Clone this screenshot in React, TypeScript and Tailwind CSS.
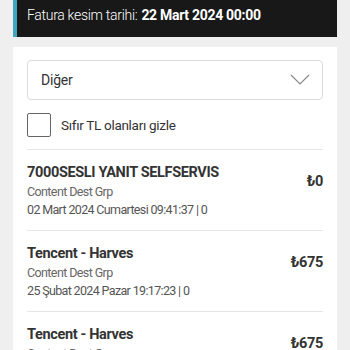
import React from 'react';

interface Item {
  title: string;
  sub: string;
  date: string;
  price: string;
}

const items: Item[] = [
  { title: '7000SESLI YANIT SELFSERVIS', sub: 'Content Dest Grp', date: '02 Mart 2024 Cumartesi 09:41:37 | 0', price: '₺0' },
  { title: 'Tencent - Harves', sub: 'Content Dest Grp', date: '25 Şubat 2024 Pazar 19:17:23 | 0', price: '₺675' },
  { title: 'Tencent - Harves', sub: 'Content Dest Grp', date: '25 Şubat 2024 Pazar 19:17:23 | 0', price: '₺675' },
];

const Row: React.FC<{ item: Item }> = ({ item }) => (
  <div className="border-t border-[#e6e6e6] flex justify-between pt-[13px] pb-[11px]">
    <div className="flex flex-col">
      <span className="text-[14.5px] leading-[20px] tracking-[-0.35px] font-bold text-[#333]">{item.title}</span>
      <span className="text-[12.5px] leading-[18px] tracking-[-0.6px] text-[#666]">{item.sub}</span>
      <span className="text-[12.5px] leading-[18px] tracking-[-0.65px] text-[#555]">{item.date}</span>
    </div>
    <span className="mt-[9px] text-[14.5px] leading-[20px] tracking-[-0.3px] font-bold text-[#333]">{item.price}</span>
  </div>
);

export default function App() {
  return (
    <div className="w-[350px] h-[350px] overflow-hidden bg-[#efefef] px-[13px]" style={{ fontFamily: 'Roboto, sans-serif' }}>
      <div className="h-[37px] bg-[#181818] border-l-4 border-[#3ea6bd] flex items-center pl-[10px] pb-[7px] text-[14px] tracking-[-0.3px] text-white">
        <span className="font-light">Fatura kesim tarihi: </span>
        <span className="font-bold ml-[4px]">22 Mart 2024 00:00</span>
      </div>
      <div className="mt-[10px] bg-white px-[14px] pt-[13px]">
        <div className="h-[40px] rounded-[4px] border border-[#dcdcdc] flex items-center justify-between pl-[13px] pr-[12px]">
          <span className="text-[14px] tracking-[-0.2px] text-[#333]">Diğer</span>
          <svg width="20" height="12" viewBox="0 0 20 12" fill="none">
            <path d="M1 1 L10 10 L19 1" stroke="#888" strokeWidth="1.2" />
          </svg>
        </div>
        <div className="mt-[13px] flex items-center gap-[10px] h-[24px]">
          <div className="w-[24px] h-[24px] rounded-[2px] border border-[#666]" />
          <span className="text-[13.5px] tracking-[-0.3px] text-[#333]">Sıfır TL olanları gizle</span>
        </div>
        <div className="mt-[12px]">
          {items.map((item, i) => (
            <Row key={i} item={item} />
          ))}
        </div>
      </div>
    </div>
  );
}
